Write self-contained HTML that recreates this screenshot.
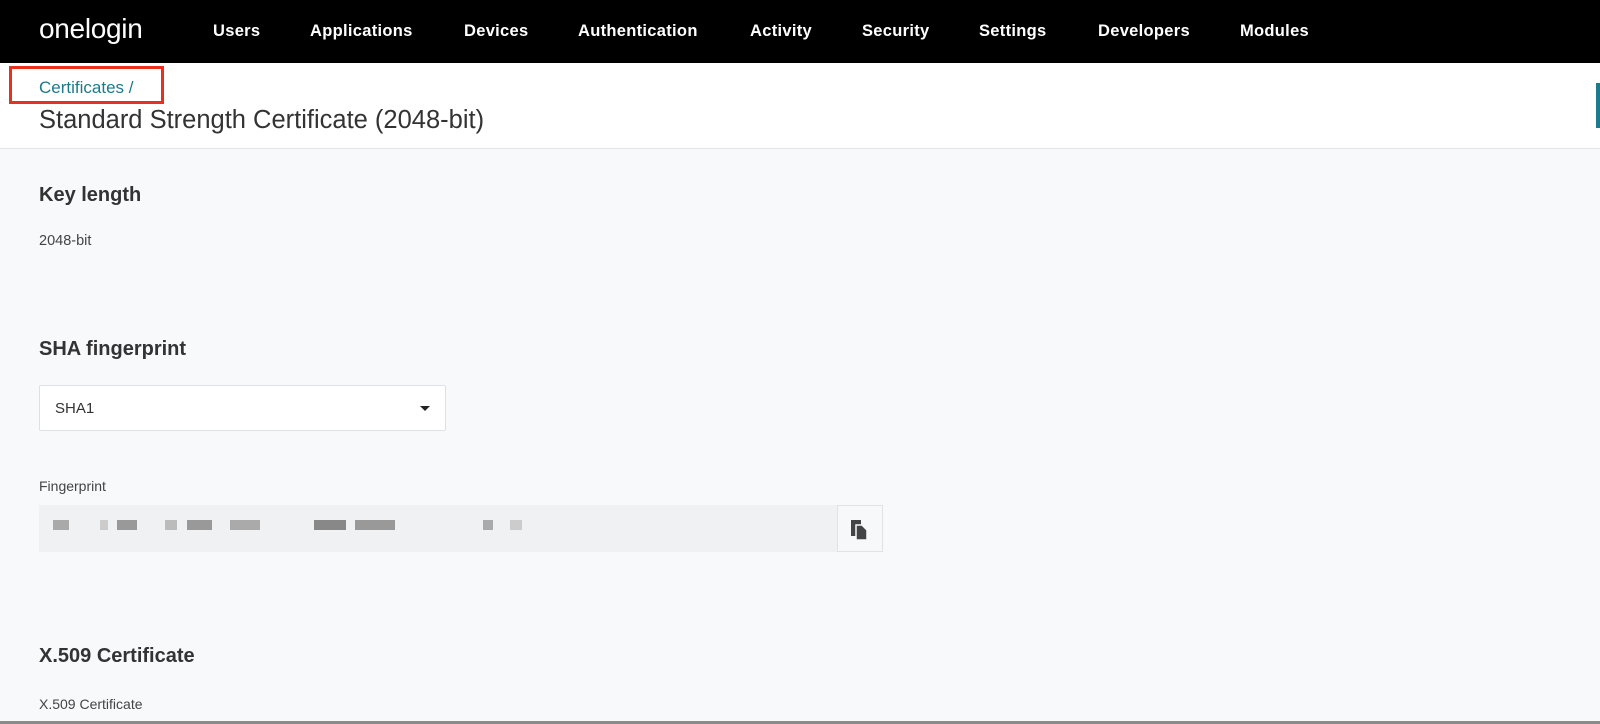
<!DOCTYPE html>
<html><head><meta charset="utf-8"><style>
*{margin:0;padding:0;box-sizing:border-box}
body{width:1600px;height:724px;overflow:hidden;background:#f7f9fa;font-family:"Liberation Sans",sans-serif;position:relative;color:#333}
.nav{position:absolute;left:0;top:0;width:1600px;height:63px;background:#000;color:#fff}
.logo{position:absolute;left:39px;top:13px;font-size:28px;letter-spacing:-0.3px}
.nav span.i{position:absolute;top:22px;font-size:16.5px;font-weight:bold;letter-spacing:0.3px}
.hdr{position:absolute;left:0;top:63px;width:1600px;height:86px;background:#fff;border-bottom:1px solid #e3e6e8}
.red{position:absolute;left:9px;top:66px;width:155px;height:38px;border:3px solid #e8301e}
.bc{position:absolute;left:39px;top:78px;font-size:17px;color:#1d7a8c}
.t{position:absolute;left:39px;top:106px;font-size:25.5px;color:#333}
.blue{position:absolute;left:1596px;top:83px;width:4px;height:45px;background:#1d7a8c}
.h{position:absolute;left:39px;font-size:20px;font-weight:bold;color:#333}
.p{position:absolute;left:39px;font-size:14.5px;color:#444}
.sel{position:absolute;left:39px;top:385px;width:407px;height:46px;background:#fff;border:1px solid #dde1e4;border-radius:2px}
.sel span{position:absolute;left:15px;top:14px;font-size:15px}
.arr{position:absolute;right:15px;top:20px;width:0;height:0;border-left:5px solid transparent;border-right:5px solid transparent;border-top:5px solid #222}
.fp{position:absolute;left:39px;top:505px;width:844px;height:47px;background:#eff1f2}
.cp{position:absolute;left:837px;top:505px;width:46px;height:47px;background:#f7f8f9;border:1px solid #e0e3e5}
.b{position:absolute;top:520px;height:10px;background:#a9a9a9}
.bl{position:absolute;left:0;top:721px;width:1600px;height:3px;background:#8a8a8a}
</style></head><body>
<div class="nav">
<div class="logo">onelogin</div>
<span class="i" style="left:213px">Users</span>
<span class="i" style="left:310px">Applications</span>
<span class="i" style="left:464px">Devices</span>
<span class="i" style="left:578px">Authentication</span>
<span class="i" style="left:750px">Activity</span>
<span class="i" style="left:862px">Security</span>
<span class="i" style="left:979px">Settings</span>
<span class="i" style="left:1098px">Developers</span>
<span class="i" style="left:1240px">Modules</span>
</div>
<div class="hdr"></div>
<div class="red"></div>
<div class="bc">Certificates /</div>
<div class="t">Standard Strength Certificate (2048-bit)</div>
<div class="blue"></div>
<div class="h" style="top:184px">Key length</div>
<div class="p" style="top:233px">2048-bit</div>
<div class="h" style="top:338px">SHA fingerprint</div>
<div class="sel"><span>SHA1</span><div class="arr"></div></div>
<div class="p" style="top:478px;font-size:14px">Fingerprint</div>
<div class="fp"></div>
<div class="b" style="left:53px;width:16px"></div>
<div class="b" style="left:100px;width:8px;background:#ccc"></div>
<div class="b" style="left:117px;width:20px;background:#999"></div>
<div class="b" style="left:165px;width:12px;background:#bbb"></div>
<div class="b" style="left:187px;width:25px;background:#999"></div>
<div class="b" style="left:230px;width:30px;background:#aaa"></div>
<div class="b" style="left:314px;width:32px;background:#888"></div>
<div class="b" style="left:355px;width:40px;background:#999"></div>
<div class="b" style="left:483px;width:10px;background:#aaa"></div>
<div class="b" style="left:510px;width:12px;background:#ccc"></div>
<div class="cp"><svg width="46" height="47" viewBox="0 0 46 47"><rect x="13" y="14" width="10" height="16" fill="#444"/><path d="M18 19h6l5 5v10h-11z" fill="#444" stroke="#f7f8f9" stroke-width="1.5"/></svg></div>
<div class="h" style="top:645px">X.509 Certificate</div>
<div class="p" style="top:696px;font-size:14px">X.509 Certificate</div>
<div class="bl"></div>
</body></html>
